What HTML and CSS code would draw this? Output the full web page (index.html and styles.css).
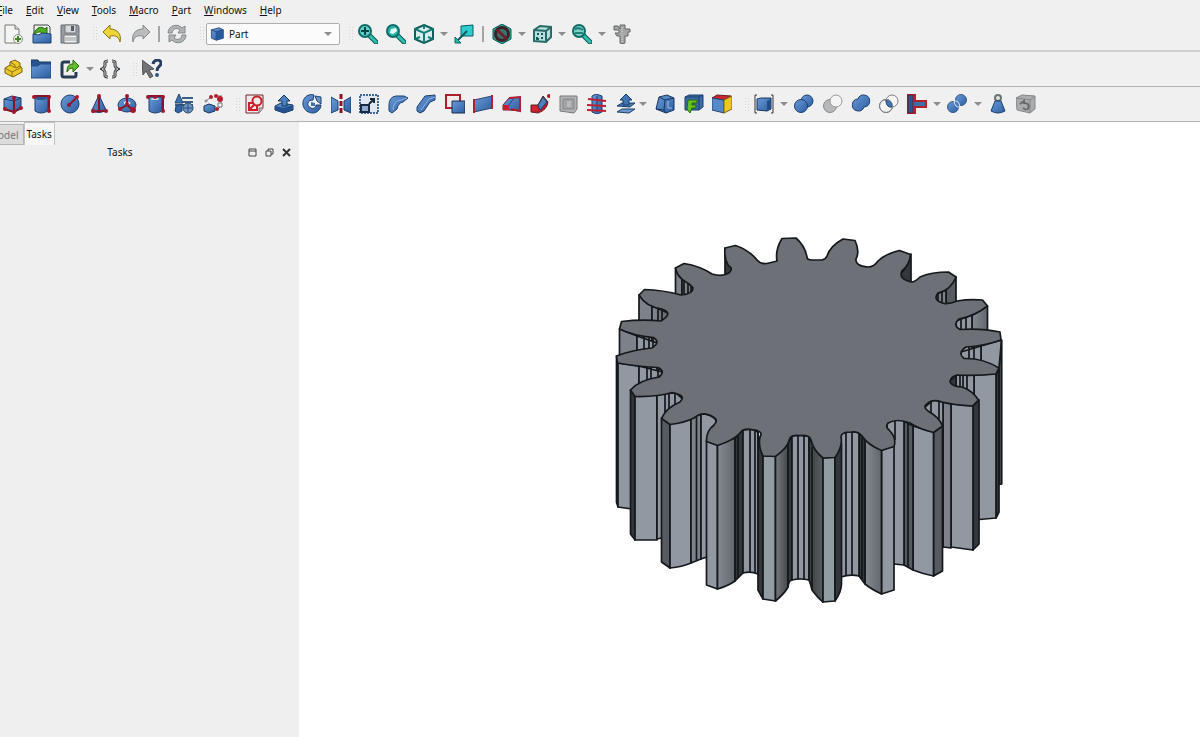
FILE: index.html
```
<!DOCTYPE html>
<html lang="en">
<head>
  <meta charset="UTF-8">
  <meta name="viewport" content="width=device-width, initial-scale=1.0">
  <title>Part workbench</title>
  <link rel="stylesheet" href="styles.css">
</head>
<body>
  <!-- Shared gradients -->
  <svg class="defs" aria-hidden="true">
    <defs>
      <linearGradient id="blue" x1="0" y1="0" x2="1" y2="1"><stop offset="0" stop-color="#6a9bd8"/><stop offset="1" stop-color="#2d5d9f"/></linearGradient>
      <linearGradient id="shade" x1="0" y1="0" x2="1" y2="0"><stop offset="0" stop-color="#858a93"/><stop offset="1" stop-color="#62666d"/></linearGradient>
      <linearGradient id="deep" x1="0" y1="0" x2="1" y2="0"><stop offset="0" stop-color="#777a7d"/><stop offset="1" stop-color="#454849"/></linearGradient>
      <linearGradient id="deep2" x1="0" y1="0" x2="1" y2="0"><stop offset="0" stop-color="#393d3e"/><stop offset="1" stop-color="#5a5e60"/></linearGradient>
    </defs>
  </svg>

  <nav class="menubar">
    <a href="#"><u>F</u>ile</a>
    <a href="#"><u>E</u>dit</a>
    <a href="#"><u>V</u>iew</a>
    <a href="#"><u>T</u>ools</a>
    <a href="#"><u>M</u>acro</a>
    <a href="#"><u>P</u>art</a>
    <a href="#"><u>W</u>indows</a>
    <a href="#"><u>H</u>elp</a>
  </nav>

  <!-- File, workbench and view toolbars -->
  <div class="toolbar thick">
    <div class="group file">
      <button aria-label="New"><svg viewBox="0 0 20 20"><path d="M2 1h10l4 4v14H2z" fill="#f4f5f3" stroke="#777a76"/><path d="M12 1v4h4" fill="#ddd" stroke="#777a76"/><circle cx="15" cy="15" r="4.500" fill="#e9f0e4" stroke="#8c9389"/><path d="M15 12v6M12 15h6" stroke="#46822a" stroke-width="2"/></svg></button>
      <button aria-label="Open"><svg viewBox="0 0 20 20"><path d="M2 10V1h14l2 2v8" fill="#eef3ea" stroke="#3c4045"/><path d="M2 9C5 3 9 2 13 5l2-2v8H8l2-2C8 7 5 8 2 11z" fill="#4fae22" stroke="#256611"/><path d="M1 10l5 1 5-2 8 1v9H1z" fill="url(#blue)" stroke="#1d426f"/></svg></button>
      <button aria-label="Save"><svg viewBox="0 0 20 20"><path d="M1 1h17l1 2v16H1z" fill="#979da4" stroke="#666d74"/><path d="M5 1h11v8H5z" fill="#d5d9dc" stroke="#777"/><path d="M11 2h3v5h-3z" fill="#555b62"/><path d="M4 11h13v8H4z" fill="#eff0f1" stroke="#777"/><path d="M5 14h11M5 16h11" stroke="#999"/></svg></button>
    </div>
    <span class="handle"></span>
    <div class="group undo">
      <button aria-label="Undo"><svg viewBox="0 0 20 20"><path d="M1 8l7-7v4c7 0 12 5 10 13-1-5-4-7-10-6v3z" fill="#efd53a" stroke="#8a7410"/></svg></button>
      <button aria-label="Redo"><svg viewBox="0 0 20 20"><path d="M19 8l-7-7v4C5 5 0 10 2 18c1-5 4-7 10-6v3z" fill="#b9bbbc" stroke="#85888a"/></svg></button>
    </div>
    <span class="sep"></span>
    <button aria-label="Refresh"><svg viewBox="0 0 20 20"><path d="M1 9C1 1 11-1 15 4l3-2v7h-7l2-3C9 3 6 5 5 9zM19 11c0 8-10 10-14 5l-3 2v-7h7l-2 3c4 3 7 1 8-3z" fill="#b1b4b5" stroke="#85898a"/></svg></button>
    <span class="handle"></span>
    <label class="workbench" aria-label="Workbench">
      <svg viewBox="0 0 20 20"><path d="M2 4l11-3 6 3v12L9 19 2 16z" fill="url(#blue)" stroke="#16365f"/><path d="M2 4l7 3 10-3M9 7v12" fill="none" stroke="#16365f"/><path d="M9 7l10-3v12L9 19z" fill="#285b9e"/></svg>
      <select><option>Part</option></select>
      <i class="arrow"></i>
    </label>
    <span class="handle"></span>
    <div class="group view">
      <button aria-label="Fit all"><svg viewBox="0 0 20 20"><path d="M12 12l6 6" stroke="#0b5550" stroke-width="5" stroke-linecap="round"/><path d="M12 12l6 6" stroke="#2fc0b4" stroke-width="3" stroke-linecap="round"/><circle cx="7" cy="7" r="6" fill="#63cfc5" stroke="#0f6b66" stroke-width="2"/><path d="M7 3v8M3 7h8" stroke="#064744" stroke-width="2"/></svg></button>
      <button aria-label="Fit selection"><svg viewBox="0 0 20 20"><path d="M12 12l6 6" stroke="#0b5550" stroke-width="5" stroke-linecap="round"/><path d="M12 12l6 6" stroke="#2fc0b4" stroke-width="3" stroke-linecap="round"/><circle cx="7" cy="7" r="6" fill="#2bb3a8" stroke="#0f6b66" stroke-width="2"/><path d="M5 5l5-1 1 3-4 3-3-1z" fill="#e8fffc"/></svg></button>
      <button aria-label="Isometric"><svg viewBox="0 0 20 20"><path d="M10 1l9 4v10l-9 4-9-4V5z" fill="#d9efed" stroke="#105e5b" stroke-width="2"/><path d="M1 5l9 4 9-4M10 9v10M10 1v4M1 15l5-2M19 15l-5-2" fill="none" stroke="#138078" stroke-width="2"/></svg></button>
      <i class="arrow"></i>
      <button aria-label="Sync view"><svg viewBox="0 0 20 20"><path d="M7 2l12-1v11H7z" fill="#2ccbd0" stroke="#0c5c60"/><path d="M13 7L4 16" stroke="#0c5c60" stroke-width="2"/><path d="M1 13v6h6z" fill="#2ab9ad" stroke="#0c6862"/></svg></button>
      <span class="sep"></span>
      <button aria-label="Draw style"><svg viewBox="0 0 20 20"><path d="M10 0l9 5v10l-9 5-9-5V5z" fill="#2aa79c" stroke="#0d5e59"/><circle cx="10" cy="10" r="6.500" fill="#35766f" stroke="#421f27" stroke-width="3"/><path d="M5 6l10 9" stroke="#7d1a2c" stroke-width="3"/></svg></button>
      <i class="arrow"></i>
      <button aria-label="Bounding box"><svg viewBox="0 0 20 20"><path d="M2 6l6-4 11 1v10l-5 5-12-1z" fill="#b7dfdb" stroke="#286b68" stroke-width="2"/><path d="M2 6l12 1v11M14 7l5-4" fill="none" stroke="#286b68" stroke-width="2"/><path d="M5 10h2M9 10h2M5 13v2h2M10 13v2" fill="none" stroke="#155a57" stroke-width="2"/></svg></button>
      <i class="arrow"></i>
      <button aria-label="Zoom"><svg viewBox="0 0 20 20"><path d="M12 12l6 6" stroke="#0b5550" stroke-width="5" stroke-linecap="round"/><path d="M12 12l6 6" stroke="#2fc0b4" stroke-width="3" stroke-linecap="round"/><circle cx="7" cy="7" r="6" fill="#7fd4cc" stroke="#0f6b66" stroke-width="2"/><path d="M3 6c2-3 5-2 8 0M3 9h8" fill="none" stroke="#23817b" stroke-width="2"/></svg></button>
      <i class="arrow"></i>
      <button aria-label="Measure"><svg viewBox="0 0 20 20"><path d="M2 2h4l2 3V1h5v4h5v3h-2v4h-3v7l-3 1-2-1v-7H5L3 9h4V6H2z" fill="#a5a7a7" stroke="#636566"/><path d="M10 3v15" stroke="#d8dada" stroke-dasharray="1 1"/></svg></button>
    </div>
  </div>

  <!-- Structure and macro toolbars -->
  <div class="toolbar">
    <div class="group structure">
      <button aria-label="Create part"><svg viewBox="0 0 20 20"><path d="M2 9l5-3V3l5-2 5 3v3l2 2v4L10 18 2 14z" fill="#ecc92c" stroke="#776007"/><path d="M2 9l7 4 10-5M7 6l6 3 4-2M9 13v5M7 3l5 3v3" fill="none" stroke="#8d7311"/></svg></button>
      <button aria-label="Create group"><svg viewBox="0 0 20 20"><path d="M0 1h7l1 2h12v15H0z" fill="#27548e" stroke="#173961"/><path d="M0 7h7l2-2h11v14H0z" fill="url(#blue)" stroke="#204d86"/></svg></button>
      <button aria-label="Make link"><svg viewBox="0 0 20 20"><path d="M10 3H4Q2 3 2 5v11q0 2 2 2h10q2 0 2-2v-3" fill="none" stroke="#273c55" stroke-width="3"/><path d="M7 13c0-6 2-8 6-8V1l6 6-6 6V9c-3 0-4 1-6 4z" fill="#62bd2a" stroke="#28620d"/></svg></button>
      <i class="arrow"></i>
      <button aria-label="Expression"><svg viewBox="0 0 20 20"><path d="M8 2C4 2 5 4 5 6c0 2-1 3-3 4 2 1 3 2 3 4 0 2-1 4 3 4M12 2c4 0 3 2 3 4 0 2 1 3 3 4-2 1-3 2-3 4 0 2 1 4-3 4" fill="none" stroke="#3e4143" stroke-width="3"/><path d="M8 2C4 2 5 4 5 6c0 2-1 3-3 4 2 1 3 2 3 4 0 2-1 4 3 4M12 2c4 0 3 2 3 4 0 2 1 3 3 4-2 1-3 2-3 4 0 2 1 4-3 4" fill="none" stroke="#d5d5d5"/></svg></button>
    </div>
    <span class="handle"></span>
    <button aria-label="What's this?"><svg viewBox="0 0 20 20"><path d="M11 5c1-5 8-5 8-1 0 4-4 3-4 8" fill="none" stroke="#263e5f" stroke-width="3"/><circle cx="15" cy="16" r="2" fill="#315786"/><path d="M0 1l12 9-5 1 4 6-3 2-4-7-3 4z" fill="#727475" stroke="#4d4f50"/></svg></button>
  </div>

  <!-- Part toolbars -->
  <div class="toolbar part">
    <div class="group solids">
      <button aria-label="Cube"><svg viewBox="0 0 20 20"><path d="M1 5l8-3 9 2v11l-7 3-10-3z" fill="url(#blue)" stroke="#1b3f6d"/><path d="M1 5l10 2 7-3" fill="none" stroke="#1b3f6d"/><path d="M11 4v14M1 15l10 3 7-4" fill="none" stroke="#80152b" stroke-width="2"/><g fill="#a3172d"><circle cx="11" cy="4" r="2"/><circle cx="2" cy="15" r="2"/><circle cx="18" cy="14" r="2"/><circle cx="11" cy="18" r="2"/></g></svg></button>
      <button aria-label="Cylinder"><svg viewBox="0 0 20 20"><path d="M3 3v14q6 4 13 0V3z" fill="url(#blue)" stroke="#1b3f6d"/><ellipse cx="9" cy="4" rx="6" ry="2" fill="#2e5688"/><path d="M2 2h15v15" fill="none" stroke="#82152b" stroke-width="2"/><g fill="#a3172d"><circle cx="2" cy="3" r="2"/><circle cx="17" cy="3" r="2"/><circle cx="17" cy="17" r="2"/></g></svg></button>
      <button aria-label="Sphere"><svg viewBox="0 0 20 20"><circle cx="10" cy="10" r="9" fill="url(#blue)" stroke="#1b3f6d"/><path d="M9 11l8-8" stroke="#8b1830" stroke-width="2"/><circle cx="9" cy="11" r="2" fill="#8b1830"/><circle cx="17" cy="3" r="2" fill="#b7152b"/></svg></button>
      <button aria-label="Cone"><svg viewBox="0 0 20 20"><path d="M10 1L3 16q7 5 14 0z" fill="url(#blue)" stroke="#1b3f6d"/><path d="M10 2v15h7M10 17l-7 1" fill="none" stroke="#82152b" stroke-width="2"/><g fill="#a3172d"><circle cx="10" cy="2" r="2"/><circle cx="17" cy="17" r="2"/><circle cx="4" cy="17" r="2"/></g></svg></button>
      <button aria-label="Torus"><svg viewBox="0 0 20 20"><ellipse cx="10" cy="11" rx="9" ry="7" fill="url(#blue)" stroke="#1b3f6d"/><path d="M7 8q3-2 7 1l-3 2-4-1z" fill="#e8edf4"/><path d="M10 2v9l6 5M10 11l-7 4" fill="none" stroke="#82152b" stroke-width="2"/><g fill="#a3172d"><circle cx="10" cy="2" r="2"/><circle cx="10" cy="10" r="2"/><circle cx="16" cy="16" r="3"/><circle cx="3" cy="15" r="2"/></g></svg></button>
      <button aria-label="Tube"><svg viewBox="0 0 20 20"><path d="M3 3v14q6 4 13 0V3z" fill="url(#blue)" stroke="#1b3f6d"/><ellipse cx="9" cy="5" rx="4" ry="1" fill="#d8dfe8"/><path d="M2 2h15v15" fill="none" stroke="#82152b" stroke-width="2"/><g fill="#a3172d"><circle cx="2" cy="3" r="2"/><circle cx="9" cy="3" r="2"/><circle cx="17" cy="3" r="2"/><circle cx="17" cy="17" r="2"/></g></svg></button>
      <button aria-label="Primitives"><svg viewBox="0 0 20 20"><path d="M5 0L1 9h8z" fill="#3f73b1" stroke="#244569"/><path d="M8 4h11M9 8h10M1 11h18" stroke="#3b5f86" stroke-width="2"/><path d="M2 12l6-2v7l-4 2-3-2z" fill="#3165a5" stroke="#244569"/><circle cx="14" cy="14" r="5" fill="#6f94bd" stroke="#244569"/><path d="M10 14h8M14 10v8" stroke="#2b5382"/></svg></button>
      <button aria-label="Shape builder"><svg viewBox="0 0 20 20"><path d="M1 12l5-2 6 2v5l-6 2-5-2z" fill="url(#blue)" stroke="#16365f"/><path d="M8 3l-5 4M13 2h6M18 4v8l-4 4" fill="none" stroke="#777"/><g fill="#b51e32"><circle cx="8" cy="3" r="2"/><circle cx="13" cy="2" r="2"/><circle cx="17" cy="5" r="3"/><circle cx="14" cy="15" r="2"/></g><g fill="#f1f1f1" stroke="#777"><circle cx="3" cy="7" r="1"/><path d="M15 9h4v4h-4z"/></g></svg></button>
    </div>
    <span class="handle"></span>
    <div class="group tools">
      <button aria-label="Sketch"><svg viewBox="0 0 20 20"><path d="M1 1h17v13l-4 5H1z" fill="#f3e7e7" stroke="#6c2630"/><circle cx="12" cy="7" r="4.500" fill="none" stroke="#c9202d" stroke-width="2"/><path d="M9 9H4v7h8v-4M5 15l5-5" fill="none" stroke="#c9202d" stroke-width="2"/><path d="M14 19v-5h4" fill="#bbb" stroke="#777"/></svg></button>
      <button aria-label="Extrude"><svg viewBox="0 0 20 20"><path d="M1 12l6-3 12 2v5l-9 3-9-3z" fill="url(#blue)" stroke="#16365f"/><path d="M1 12l9 2 9-3v5l-9 3-9-3z" fill="#24508d"/><path d="M10 1l6 6h-3v5H8V7H4z" fill="#4d80bc" stroke="#16365f"/></svg></button>
      <button aria-label="Revolve"><svg viewBox="0 0 20 20"><path d="M12 1C5-1 0 5 1 11c1 5 5 8 10 8 4 0 8-4 8-8h-5c0 3-3 4-5 3-5-2-4-8 2-8z" fill="url(#blue)" stroke="#1b4374"/><path d="M13 2l6 1v7l-4-3z" fill="#6b95c7" stroke="#1b4374"/><path d="M9 8l4 1v3H9z" fill="#3d70ad"/></svg></button>
      <button aria-label="Mirror"><svg viewBox="0 0 20 20"><path d="M0 3l7 4v9l-7 3zM20 3l-7 4v9l7 3z" fill="url(#blue)" stroke="#1b3f6d"/><path d="M10 0v20" stroke="#8b1527" stroke-width="3" stroke-dasharray="5 2"/></svg></button>
      <button aria-label="Scale"><svg viewBox="0 0 20 20"><path d="M1 1h18v18H1z" fill="#e1e7ee" stroke="#3f6798" stroke-width="2" stroke-dasharray="2 1"/><path d="M2 11h8v7H2z" fill="#8facd0" stroke="#182a43" stroke-width="2"/><path d="M10 10l5-5M11 5h4v4" stroke="#18283c" stroke-width="2" fill="none"/></svg></button>
      <button aria-label="Fillet"><svg viewBox="0 0 20 20"><path d="M1 11Q1 3 8 2h8l4 2-5 4q-5 1-6 7l-5 4-3-2z" fill="url(#blue)" stroke="#1b3f6d"/><path d="M5 16q0-9 8-10l6-2" fill="none" stroke="#8eb3df"/></svg></button>
      <button aria-label="Chamfer"><svg viewBox="0 0 20 20"><path d="M1 13L9 2l10-1v5l-5 2-6 9-4 2-3-2z" fill="url(#blue)" stroke="#1b3f6d"/><path d="M5 16l8-11 6-2" fill="none" stroke="#8eb3df"/></svg></button>
      <button aria-label="Make face"><svg viewBox="0 0 20 20"><path d="M1 1h14v13H1z" fill="#f5eaea" stroke="#aa1f2c" stroke-width="2"/><path d="M7 7h13v12H7z" fill="url(#blue)" stroke="#172f50"/></svg></button>
      <button aria-label="Ruled surface"><svg viewBox="0 0 20 20"><path d="M1 6l18-4v12L1 18z" fill="url(#blue)" stroke="#254974"/><path d="M1 5v14M19 1v14" stroke="#b4202d" stroke-width="2"/></svg></button>
      <button aria-label="Loft"><svg viewBox="0 0 20 20"><path d="M1 11l6-7 11-1v14L7 16H1z" fill="url(#blue)" stroke="#6c1f2d"/><path d="M1 11h6v5H1z" fill="#c5202d"/><path d="M7 4l11-1v14l-9-2" fill="none" stroke="#b31f30" stroke-width="2"/><path d="M7 11l5-7" stroke="#24456d"/></svg></button>
      <button aria-label="Sweep"><svg viewBox="0 0 20 20"><path d="M1 11h7l5-9 5 6q-1 8-10 11l-7-1z" fill="#b71d2b" stroke="#66202c"/><path d="M8 11l5-8 4 5-7 8z" fill="#4d80bc" stroke="#1b3f6d"/><path d="M2 12h5l1 5H2z" fill="#d7222e"/><circle cx="19" cy="2" r="2" fill="#a9182a"/></svg></button>
      <button aria-label="Section"><svg viewBox="0 0 20 20"><path d="M1 2h17v13l-3 4-14-2z" fill="#b1b3b4" stroke="#77797a"/><path d="M4 5h11v10H4z" fill="#a0a2a4" stroke="#868889"/><path d="M8 7h4v6H8z" fill="#b9bbbc"/></svg></button>
      <button aria-label="Cross sections"><svg viewBox="0 0 20 20"><path d="M5 2l4-2 6 2v16l-5 2-5-2z" fill="url(#blue)" stroke="#1b3f6d"/><path d="M10 2v16" stroke="#1d406b"/><path d="M1 5l18 2M0 11l19 1M0 16l19 1" stroke="#bd2130" stroke-width="2"/></svg></button>
      <button aria-label="Offset"><svg viewBox="0 0 20 20"><path d="M1 12l5-3h13l-5 4z" fill="#497bb8" stroke="#1b3f6d"/><path d="M10 0l6 6h-3v5H7V6H4z" fill="#3f73b1" stroke="#1b3f6d"/><path d="M1 18l5-3h13l-6 4z" fill="#6c98cb" stroke="#1b3f6d"/></svg></button>
    </div>
    <i class="arrow"></i>
    <div class="group extra">
      <button aria-label="Thickness"><svg viewBox="0 0 20 20"><path d="M1 15L4 3l8-2 7 3v12l-8 3z" fill="url(#blue)" stroke="#16365f"/><path d="M4 3l6 3 9-2M1 15l8 1 1-10M9 16l2 3" fill="none" stroke="#16365f"/><path d="M13 7v7h4" fill="none" stroke="#9cbce1"/></svg></button>
      <button aria-label="Projection on surface"><svg viewBox="0 0 20 20"><path d="M1 3l4-2h14v12l-4 3H1z" fill="#396ca9" stroke="#1b3f6d"/><path d="M1 3h14l4-2M15 3v13" fill="none" stroke="#1b3f6d"/><path d="M4 6h9v3H8v2h4v3H8l-2 5-3-4z" fill="#65c41d" stroke="#28630d"/></svg></button>
      <button aria-label="Color per face"><svg viewBox="0 0 20 20"><path d="M0 4l5-3 14 1-7 4z" fill="#c62731" stroke="#731b22"/><path d="M0 4l12 2v13L0 16z" fill="#5589c7" stroke="#24466f"/><path d="M12 6l8-4v13l-8 4z" fill="#edc91b" stroke="#816707"/></svg></button>
    </div>
    <span class="handle"></span>
    <div class="group boolean">
      <button aria-label="Compound"><svg viewBox="0 0 20 20"><path d="M3 1H1v18h2M17 1h2v18h-2" fill="none" stroke="#333"/><path d="M3 5l4-1h10v11l-4 2-10-1z" fill="url(#blue)" stroke="#16365f"/><path d="M13 7v9l4-2V5z" fill="#224c86"/></svg></button>
      <i class="arrow"></i>
      <button aria-label="Boolean"><svg viewBox="0 0 20 20"><circle cx="13" cy="7" r="6" fill="url(#blue)" stroke="#173e71"/><circle cx="7" cy="12" r="6.500" fill="url(#blue)" stroke="#173e71"/></svg></button>
      <button aria-label="Cut"><svg viewBox="0 0 20 20"><circle cx="7" cy="12" r="6.500" fill="#b5b7b8" stroke="#888"/><circle cx="13" cy="7" r="6" fill="#f4f4f4" stroke="#999"/></svg></button>
      <button aria-label="Union"><svg viewBox="0 0 20 20"><path d="M7 5a6 6 0 1 1 6 8 6 6 0 1 1-6-8z" fill="url(#blue)" stroke="#173e71"/></svg></button>
      <button aria-label="Intersection"><svg viewBox="0 0 20 20"><g fill="#f5f5f5" stroke="#7c8083"><circle cx="7" cy="12" r="6.500"/><circle cx="13" cy="7" r="6"/></g><path d="M7 6q6-1 6 7-6 1-6-7z" fill="#4476b3" stroke="#254a79"/><circle cx="7" cy="12" r="6.500" fill="none" stroke="#7c8083"/></svg></button>
      <button aria-label="Join"><svg viewBox="0 0 20 20"><path d="M1 1h7v6h11v6H8v6H1z" fill="#3e6da7" stroke="#b3212d" stroke-width="2"/><path d="M1 1h5v18H1z" fill="#2b578f" stroke="#60202d"/></svg></button>
      <i class="arrow"></i>
      <button aria-label="Split"><svg viewBox="0 0 20 20"><circle cx="14" cy="6" r="5.500" fill="url(#blue)" stroke="#3b5c84"/><circle cx="6" cy="13" r="5.500" fill="url(#blue)" stroke="#3b5c84"/><path d="M7 7q5-1 6 6-5 1-6-6z" fill="#4c7db9" stroke="#dce5ef"/></svg></button>
      <i class="arrow"></i>
      <button aria-label="Check geometry"><svg viewBox="0 0 20 20"><circle cx="10" cy="4" r="3" fill="#dfe3e1" stroke="#6b746f" stroke-width="2"/><path d="M7 7L3 17q7 4 14 0L13 7z" fill="url(#blue)" stroke="#1b3f6d"/></svg></button>
      <button aria-label="Defeaturing"><svg viewBox="0 0 20 20"><path d="M0 4l6-3 13 1v13l-5 4L1 16z" fill="#aaacad" stroke="#858788"/><path d="M0 4l14 2 5-4M14 6v13" fill="none" stroke="#858788"/><path d="M4 10l4-3v2c5 0 6 3 3 7M7 14l3 2" fill="none" stroke="#666869" stroke-width="2"/></svg></button>
    </div>
  </div>

  <main class="workspace">
    <aside class="panel">
      <div class="tabs">
        <button class="tab">Model</button>
        <button class="tab active">Tasks</button>
      </div>
      <div class="panel-title">
        <span>Tasks</span>
        <button aria-label="Minimize"><svg viewBox="0 0 9 9"><path d="M1 1h7v7H1zM1 3h7" fill="none" stroke="#444"/></svg></button>
        <button aria-label="Float"><svg viewBox="0 0 9 9"><path d="M3 3V1h5v5H6M1 3h5v5H1z" fill="none" stroke="#444"/></svg></button>
        <button aria-label="Close"><svg viewBox="0 0 9 9"><path d="M1 1l7 7M8 1L1 8" stroke="#333" stroke-width="2"/></svg></button>
      </div>
    </aside>

    <div class="viewport">
      <svg class="gear" viewBox="299 122 901 615" role="img" aria-label="Gear">
        <!-- Tooth sides, back to front -->
        <g class="side">
          <path class="d" d="M725 248V300H732V269Z"/>
          <path class="d" d="M911 254V300H900V274Q909 266 911 254Z"/>
          <path class="m" d="M675.5 268V340H682V277Z"/>
          <path class="m" d="M682 277V340H694V288Z"/>
          <path d="M684 280V300M688 284V300M691 286V300"/>
          <path class="k" d="M956 277V340H946V290Z"/>
          <path class="m" d="M946 290V340H935V295Z"/>
          <path d="M942 292V310M938 294V310"/>
          <path class="m" d="M639 295V370H652V306Z"/>
          <path class="s" d="M652 306V370H668V313Z"/>
          <path d="M658 308V330M662 310V330"/>
          <path class="s" d="M987.500 306V380H972V315Z"/>
          <path class="l" d="M972 315V380H956V321Z"/>
          <path d="M966 317V340M961 318V340"/>
          <path class="m" d="M619.500 329V400H637V336Z"/>
          <path class="l" d="M637 336V400H657V343Z"/>
          <path d="M644 337V360M649 337V360M653 338V360"/>
          <path class="l" d="M1001.500 340V484H981V346Z"/>
          <path class="l" d="M981 346V400H961V352Z"/>
          <path d="M974 347V370M969 347V370"/>
          <path class="m" d="M616.500 356V502L618 507V363Z"/>
          <path class="l" d="M618 363V507L639 510V366Z"/>
          <path class="l" d="M639 366V500H662V372Z"/>
          <path d="M647 367V390M651 367V390M658 368V385"/>
          <path class="k" d="M1001.500 340V484H999V368Z"/>
          <path class="d" d="M999 368V512L996 518V374Z"/>
          <path class="l" d="M996 374V518L974 520V375Z"/>
          <path class="l" d="M974 375V510H956V375Z"/>
          <path class="d" d="M956 375V490H950V381Z"/>
          <path d="M967 375V395M963 375V392M960 375V390"/>
          <path class="d" d="M630.500 390V534L635 540V396Z"/>
          <path class="l" d="M635 396V540H657V395Z"/>
          <path class="l" d="M657 395V539L671 536H684V400L676 393Q666 393 657 395Z"/>
          <path d="M665 393V535M669 393V420M675 393V410"/>
          <path class="d" d="M979 400V544L973 550V406Z"/>
          <path class="l" d="M973 406V550L951 547V404Z"/>
          <path class="m" d="M951 404V548L943 547V402Z"/>
          <path class="l" d="M943 402V547H925V407L933 400Z"/>
          <path d="M939 401V430M931 402V420"/>
          <path class="k" d="M661.500 418V562L670 568V424Z"/>
          <path class="l" d="M670 424V568Q682 567 691 563V418Z"/>
          <path class="m" d="M691 418V563L701 559V414Z"/>
          <path class="l" d="M701 414V559L707 557H716V420Q711 414 701 414Z"/>
          <path d="M696.500 416V560"/>
          <path class="k" d="M942.500 426V571L933.500 576V432Z"/>
          <path class="l" d="M933.500 432V576Q923 574 913 570V426Z"/>
          <path class="k" d="M913 426V570L904 565V421Z"/>
          <path class="l" d="M904 421V565L894 564H887V424Q893 418 904 421Z"/>
          <path d="M908 422V567M895 421V440"/>
          <path class="l" d="M706.500 441V585L717.500 589V445Z"/>
          <path class="s" d="M717.500 445V589Q728 586 735 581V438Z"/>
          <path class="d" d="M735 438V581L743 573V430Z"/>
          <path class="l" d="M743 430V573Q751 571 758 574V432Q753 428 743 430Z"/>
          <path class="d" d="M758 432V574V590L763 599V456L759 440Z"/>
          <path d="M738 436V578M750 430V572M755 430V573"/>
          <path class="l" d="M894 446V590L881.500 594V450Z"/>
          <path class="s" d="M881.500 450V594Q871 589 865 584V440Z"/>
          <path class="d" d="M865 440V584L859 576V432Z"/>
          <path class="l" d="M859 432V576Q850 574 841 577V434Q848 431 859 432Z"/>
          <path d="M862 436V579M852 432V575M846 433V576"/>
          <path class="t" d="M763 456V599L775.500 601V456Z"/>
          <path class="deep" d="M775.500 456V601Q785 593 788 587V443Z"/>
          <path class="d" d="M788 443V587Q789 580 792 580V436Z"/>
          <path class="l" d="M792 436V580Q800 578 809 580V436Q800 435 792 436Z"/>
          <path class="deep2" d="M809 436V580Q811 585 812 590Q818 598 823 602V458Q814 450 809 436Z"/>
          <path class="t" d="M823 458V602L835 601V457Z"/>
          <path class="d" d="M835 457V601Q841 593 841.500 584V443Z"/>
          <path d="M798 436V579M804 436V579M812 447V590"/>
        </g>
        <!-- Top face -->
        <path class="top" d="M777 261
          Q775 250 782 238.500L796 238Q805 246 807 257Q807 260 812 260L822 260Q826 259 827 256Q830 246 843 239
          L855 240.500Q860 251 856 259Q855 266 868 267Q874 267 878 261Q885 254 899.500 250.500
          L910.500 254.500Q910 264 902 271Q898 279 911.500 282Q915 282 920 277Q931 272 948.500 272
          L956 277Q951 290 938 293Q932 300 944 303.500Q950 304 957 301Q969 299 982.500 300
          L987.500 306Q975 316 959 319Q952 325 960 329.500Q982 328 1000 332
          L1001 340Q984 346 966 347Q957 353 964 358.500Q983 358 999 368
          L996 374Q976 376 957 375Q950 377 950 382Q953 387 962 387Q973 391 978.500 400
          L972.500 406Q954 405 942 402Q933 399 928 403Q922 407 928 411Q940 418 942.500 426
          L933.500 432.500Q919 429 910 423Q897 418 888 423Q885 427 889 430Q897 438 894 446.500
          L881.500 450.500Q868 445 862 436Q858 431 851 432Q841 432 841 437Q843 446 835 457.500
          L823 458Q813 450 811 440Q810 435 800 435.500Q790 434 789 441Q787 448 775.500 456.500
          L763 456Q758 446 760 437Q764 431 752 429.500Q743 428 740 433Q734 440 717.500 445.500
          L706.500 441.500Q706 431 714 425Q721 418 706 414Q700 413 694 418Q684 423 670 424.500
          L661.500 418.500Q666 408 680 402Q687 395 672 392.500Q658 397 635 396.500
          L630.500 390Q639 380 659 377Q666 371 658 367.500Q640 367 617.500 363
          L616.500 356Q632 350 652 348Q661 342 653.500 337.500Q634 336 619.500 329
          L621.500 321.500Q642 319 661 321Q674 313 662 309Q646 307 639 295
          L644.500 289.500Q663 290 681 295Q693 294 693 288Q690 284 686 282Q677 277 675.500 268
          L684 263.500Q700 266 712 274Q722 277 729 273Q734 269 728 265Q724 258 725 248
          L735.500 245.500Q749 250 757 260Q761 265 769 263Z"/>
      </svg>
    </div>
  </main>
</body>
</html>
```
FILE: styles.css
```
* {
  box-sizing: border-box;
}

body {
  display: flex;
  flex-direction: column;
  height: 100vh;
  margin: 0;
  overflow: hidden;
  background: #f0f0f0;
  color: #111;
  font-family: "Noto Sans", "Open Sans", sans-serif;
  font-size: 10px;
}

button {
  padding: 0;
  border: none;
  background: none;
  color: inherit;
  font: inherit;
}

.defs {
  position: absolute;
  width: 0;
  height: 0;
}

/* Menu */
.menubar {
  display: flex;
  gap: 13px;
  height: 17px;
  margin-left: -3px;
  line-height: 20px;
}

.menubar a {
  color: #111;
  text-decoration: none;
}

/* Toolbars */
.toolbar {
  display: flex;
  align-items: center;
  height: 35px;
  padding-left: 3px;
  border-bottom: 1px solid #b4b4b4;
}

.toolbar.thick {
  border-bottom: 2px solid #cfcfcf;
}

.group {
  display: flex;
  align-items: center;
  justify-content: space-between;
  flex: none;
}

.toolbar button {
  flex: none;
  width: 20px;
  height: 20px;
}

.toolbar button svg {
  display: block;
  width: 20px;
  height: 20px;
}

.file {
  width: 77px;
}

.undo {
  width: 49px;
}

.view {
  width: 274px;
}

.structure {
  width: 117px;
}

.solids {
  width: 220px;
}

.tools {
  width: 391px;
}

.extra {
  width: 77px;
}

.boolean {
  width: 282px;
}

.handle {
  flex: none;
  width: 6px;
  height: 15px;
  margin: 0 4px 0 12px;
  background-image: radial-gradient(#d6d6d6 1px, transparent 1px);
  background-size: 3px 3px;
}

.sep {
  flex: none;
  width: 2px;
  height: 16px;
  margin: 0 7px;
  background: #a4a4a4;
}

.group .sep {
  margin: 0;
}

.arrow {
  flex: none;
  width: 0;
  height: 0;
  margin: 0 -2px;
  border: 4px solid transparent;
  border-top-color: #8c8c8c;
  border-bottom: 0;
}

.toolbar > .arrow {
  margin: 0 8px 0 3px;
}

.workbench {
  position: relative;
  flex: none;
  width: 134px;
  margin: 0 -4px 0 -3px;
}

.workbench svg {
  position: absolute;
  top: 4px;
  left: 4px;
  width: 14px;
  height: 14px;
}

.workbench .arrow {
  position: absolute;
  top: 9px;
  right: 10px;
}

.workbench select {
  width: 100%;
  height: 22px;
  padding: 0 22px;
  border: 1px solid #adadad;
  border-radius: 2px;
  background: #fbfbfb;
  color: #111;
  font: inherit;
  appearance: none;
}

/* Workspace */
.workspace {
  display: flex;
  flex: 1;
  min-height: 0;
}

.panel {
  flex: none;
  width: 299px;
  background: #efefef;
}

.tabs {
  display: flex;
  align-items: flex-end;
  height: 23px;
  margin-left: -16px;
}

.tab {
  height: 21px;
  padding: 0 4px;
  border: 1px solid #b6b6b6;
  background: #dcdcdc;
  color: #777;
}

.tab.active {
  height: 23px;
  padding: 0 2px;
  border-color: #c4c4c4;
  border-bottom: none;
  background: #f7f7f7;
  color: #111;
}

.panel-title {
  display: flex;
  align-items: center;
  gap: 8px;
  height: 14px;
  padding-right: 8px;
}

.panel-title span {
  flex: 1;
  text-align: center;
}

.panel-title button,
.panel-title svg {
  display: block;
  width: 9px;
  height: 9px;
}

.viewport {
  flex: 1;
  min-width: 0;
  background: #fff;
}

.gear {
  display: block;
  width: 100%;
  height: 100%;
}

.side path,
.top {
  fill: none;
  stroke: #15181c;
  stroke-width: 1.7;
  stroke-linejoin: round;
}

.side .l {
  fill: #9298a2;
}

.side .m {
  fill: #7d828a;
}

.side .k {
  fill: #565a61;
}

.side .d {
  fill: #34373c;
}

.side .t {
  fill: #929ca3;
}

.side .s {
  fill: url(#shade);
}

.side .deep {
  fill: url(#deep);
}

.side .deep2 {
  fill: url(#deep2);
}

.top {
  fill: #6d7177;
}
```
